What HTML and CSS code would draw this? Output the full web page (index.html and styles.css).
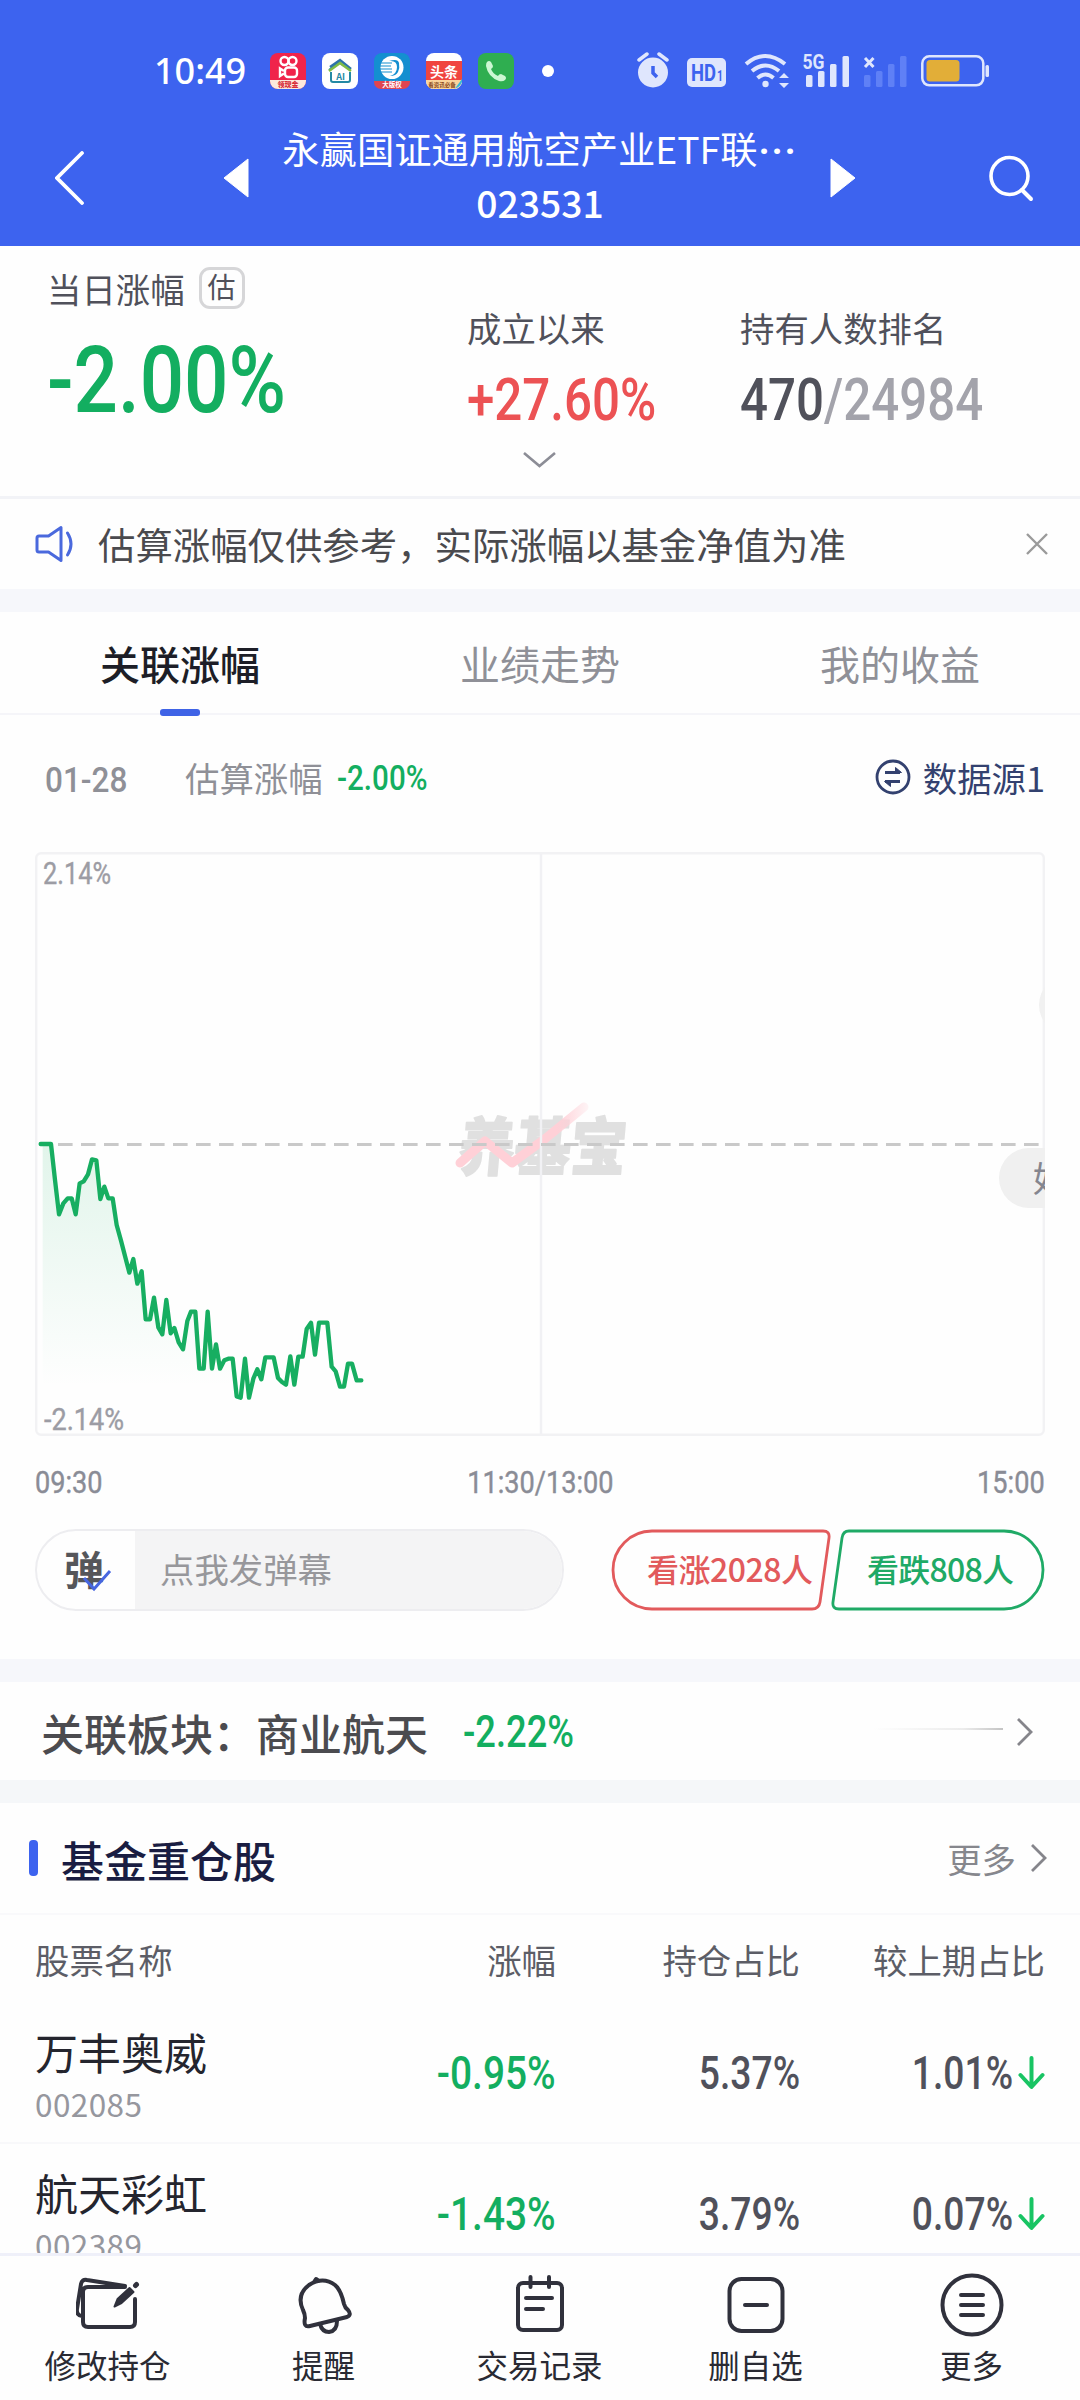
FILE: index.html
```html
<!DOCTYPE html>
<html lang="zh-CN">
<head>
<meta charset="utf-8">
<title>基金详情</title>
<link rel="stylesheet" href="styles.css">
</head>
<body>
<div class="page">
  <header class="top">
    <div class="status">
      <span class="clock">10:49</span>
      <div class="apps">
        <svg width="36" height="36" viewBox="0 0 36 36">
          <rect width="36" height="36" rx="8" fill="#f0244b"/>
          <path d="M0 27h36v1a8 8 0 0 1-8 8H8a8 8 0 0 1-8-8z" fill="#fde9dc"/>
          <g fill="none" stroke="#fff" stroke-width="2.4"><circle cx="14.500" cy="8" r="4"/><circle cx="22.500" cy="8" r="4"/><rect x="15" y="14.500" width="12" height="9.500" rx="3"/><path d="M14 18l-4-2.500v7.500l4-2.500"/></g>
          <text x="18" y="34.200" text-anchor="middle" font-size="7" font-weight="900" fill="#d8303c">领现金</text>
        </svg>
        <svg width="36" height="36" viewBox="0 0 36 36">
          <rect width="36" height="36" rx="8" fill="#fff"/>
          <path d="M7 17L17 9l5 4M9 19v8q0 2 2 2h15q2 0 2-2v-8" fill="none" stroke="#2489a4" stroke-width="2"/>
          <path d="M8 14l10-7 11 9" fill="none" stroke="#2d73a8" stroke-width="2.400"/>
          <path d="M7 18l11-8 11 8" fill="none" stroke="#7fbd45" stroke-width="2.600"/>
          <text x="18.500" y="26.500" text-anchor="middle" font-size="9" font-weight="700" fill="#2489a4">AI</text>
        </svg>
        <svg width="36" height="36" viewBox="0 0 36 36">
          <rect width="36" height="36" rx="8" fill="#148fd0"/>
          <circle cx="18" cy="14.500" r="11.500" fill="#fff"/>
          <path d="M15 8q8-1 8 6t-7 9q6 0 8-4t1-9-10-2z" fill="#148fd0"/>
          <path d="M7 10h11M6 13h11M6 16h12M7 19h11" stroke="#148fd0" stroke-width="1.200"/>
          <path d="M0 28h36v1a7 7 0 0 1-7 7H7a7 7 0 0 1-7-7z" fill="#e04550"/>
          <text x="18" y="34.400" text-anchor="middle" font-size="6.500" font-weight="700" fill="#fff">大版权</text>
        </svg>
        <svg width="36" height="36" viewBox="0 0 36 36">
          <rect width="36" height="36" rx="8" fill="#fff"/>
          <rect y="8" width="36" height="19" fill="#f0453f"/>
          <path d="M0 27h36v1a8 8 0 0 1-8 8H8a8 8 0 0 1-8-8z" fill="#fbd49b"/>
          <path d="M36 26v3q-2 5-7 6.500z" fill="#35b9d8"/>
          <text x="18" y="24" text-anchor="middle" font-size="14" font-weight="700" fill="#fff">头条</text>
          <text x="16" y="34" text-anchor="middle" font-size="5.500" font-weight="700" fill="#8a4a20">看资讯必备</text>
        </svg>
        <svg width="36" height="36" viewBox="0 0 36 36">
          <rect width="36" height="36" rx="8" fill="#2fae50"/>
          <path d="M9 9q2-2 4 0l2 4q0 2-2 3 2 5 7 7 1-2 3-2l4 2q2 2 0 4-2 2-6 1Q10 24 8 13q0-3 1-4z" fill="#cdf7d2"/>
        </svg>
      </div>
      <i class="dot"></i>
      <svg class="signals" width="270" height="40" viewBox="0 0 270 40">
        <g fill="#dfe6fd">
          <circle cx="16" cy="21.500" r="15"/>
          <path d="M2 9l8-6M22 3l8 6" stroke="#dfe6fd" stroke-width="3.500" stroke-linecap="round"/>
          <path d="M16 15v7l4 4" fill="none" stroke="#3d63ef" stroke-width="3.500"/>
          <rect x="50" y="7" width="39" height="29" rx="5"/>
        </g>
        <text x="54" y="29.500" font-family="Roboto" font-size="23" font-weight="700" fill="#3d63ef" textLength="25" lengthAdjust="spacingAndGlyphs">HD</text>
        <text x="80" y="29.500" font-family="Roboto" font-size="14" font-weight="700" fill="#3d63ef" textLength="6" lengthAdjust="spacingAndGlyphs">1</text>
        <g fill="none" stroke="#dfe6fd" stroke-width="4">
          <path d="M109 13q19-16 39 0M115 20q13.500-11 27 0M120.500 27q8-7 16 0"/>
        </g>
        <g fill="#dfe6fd">
          <circle cx="128.500" cy="33" r="3.200"/>
          <path d="M142 27l5-5 5 5zM142 32h10l-5 5z"/>
          <text x="165.500" y="18" font-family="Roboto" font-size="20" font-weight="700" textLength="22" lengthAdjust="spacingAndGlyphs">5G</text>
          <rect x="169" y="24" width="6.500" height="12" rx="1.500"/><rect x="181" y="20" width="6.500" height="16" rx="1.500"/><rect x="193" y="13" width="6.500" height="23" rx="1.500"/><rect x="205.500" y="5" width="6.500" height="31" rx="1.500"/>
        </g>
        <path d="M228 7l8.500 9M236.500 7l-8.500 9" stroke="#dfe6fd" stroke-width="3"/>
        <g fill="#5f80f6"><rect x="227" y="24" width="6.500" height="12" rx="1.500"/><rect x="239" y="20" width="6.500" height="16" rx="1.500"/><rect x="251" y="13" width="6.500" height="23" rx="1.500"/><rect x="263" y="5" width="6.500" height="31" rx="1.500"/></g>
      </svg>
      <svg class="battery" width="69" height="32" viewBox="0 0 69 32">
        <rect x="1.300" y="1.300" width="61" height="29" rx="7" fill="none" stroke="#dfe6fd" stroke-width="2.500"/>
        <rect x="5.500" y="5" width="33" height="21.500" rx="3.500" fill="#e2ae38"/>
        <rect x="64.500" y="10" width="3.500" height="12" rx="1.500" fill="#dfe6fd"/>
      </svg>
    </div>
    <div class="titlebar">
      <svg width="30" height="54" viewBox="0 0 30 54"><path d="M27 2L2 27l25 25" fill="none" stroke="#fff" stroke-width="3.800" stroke-linecap="round"/></svg>
      <svg class="prev" width="26" height="42" viewBox="0 0 26 42"><path d="M25 2v38L1 21z" fill="#fff" stroke="#fff" stroke-linejoin="round"/></svg>
      <div class="title"><span>永赢国证通用航空产业ETF联<span class="dots">···</span></span><b>023531</b></div>
      <svg class="next" width="26" height="42" viewBox="0 0 26 42"><path d="M1 2v38l24-19z" fill="#fff" stroke="#fff" stroke-linejoin="round"/></svg>
      <svg class="search" width="46" height="48" viewBox="0 0 46 48"><circle cx="20.500" cy="21" r="18.500" fill="none" stroke="#fff" stroke-width="3.600"/><path d="M33 35l9 9" stroke="#fff" stroke-width="4" stroke-linecap="round"/></svg>
    </div>
  </header>

  <main class="content">
    <section class="stats">
      <div class="today">
        <div class="label">当日涨幅<em>估</em></div>
        <div class="num big green">-2.00%</div>
      </div>
      <div class="stat since"><div class="label">成立以来</div><div class="num mid red">+27.60%</div></div>
      <div class="stat"><div class="label">持有人数排名</div><div class="num mid rank">470<span>/24984</span></div></div>
      <svg class="expand" width="35" height="18" viewBox="0 0 35 18"><path d="M2 2l15.500 13L33 2" fill="none" stroke="#8c8d96" stroke-width="2.600"/></svg>
    </section>

    <section class="notice">
      <svg width="40" height="38" viewBox="0 0 40 38" fill="none" stroke="#4a69dd" stroke-width="3" stroke-linejoin="round" stroke-linecap="round"><path d="M26 2.500v33L13.500 27H4q-2 0-2-2V13q0-2 2-2h9.500zM32.500 8q7 11 0 22"/></svg>
      <span>估算涨幅仅供参考，实际涨幅以基金净值为准</span>
      <svg width="24" height="24" viewBox="0 0 24 24"><path d="M2 2l20 20M22 2L2 22" stroke="#9a9a9a" stroke-width="2.400"/></svg>
    </section>

    <nav class="tabs"><a class="on">关联涨幅</a><a>业绩走势</a><a>我的收益</a></nav>

    <section class="trend">
      <div class="meta">
        <span class="num date">01-28</span><span class="est">估算涨幅</span><span class="num val green">-2.00%</span>
        <div class="source">
          <svg width="36" height="36" viewBox="0 0 36 36" fill="none" stroke="#33416f" stroke-width="2.800"><circle cx="18" cy="18" r="16"/><path d="M10 13.500h15M10 22.500h15" /><path d="M20.500 8.500l6 5h-6zM15.500 27.500l-6-5h6z" fill="#33416f" stroke-width="1"/></svg>
          <span>数据源1</span>
        </div>
      </div>
      <svg class="chart" width="1010" height="584" viewBox="0 0 1010 584">
        <defs>
          <linearGradient id="fade" x1="0" y1="0" x2="0" y2="1"><stop offset="0" stop-color="#0fae5c" stop-opacity=".12"/><stop offset="1" stop-color="#0fae5c" stop-opacity="0"/></linearGradient>
          <linearGradient id="streak" gradientUnits="userSpaceOnUse" x1="425" y1="0" x2="554" y2="0"><stop offset=".75" stop-color="#ffd0d7"/><stop offset="1" stop-color="#ffd0d7" stop-opacity=".2"/></linearGradient>
        </defs>
        <g transform="translate(422 318) skewX(-5) scale(1 1.120)" fill="#e0e0e0" stroke="#e0e0e0" stroke-width="1.500" stroke-linejoin="round">
          <text font-size="56" font-weight="900" textLength="168">养基宝</text>
        </g>
        <path d="M425 311l25-22 27 22 34-25 38-31" fill="none" stroke="url(#streak)" stroke-width="9" stroke-linecap="round" stroke-linejoin="round"/>
        <path d="M506 1v582" stroke="#f1f1f4" stroke-width="2.400"/>
        <rect x="1.200" y="1.200" width="1007.600" height="581.600" rx="5" fill="none" stroke="#f2f2f4" stroke-width="2.400"/>
        <path d="M23 292.500H1005" stroke="#c9c9c9" stroke-width="2.800" stroke-dasharray="14.600 8.400"/>
        <g transform="translate(-15 268) scale(.33333)">
          <path fill="url(#fade)" d="M68 72L93 72 105 180 117 283 130 250 143 235 155 235 167 283 179 190 191 184 204 163 216 118 229 121 241 237 253 200 265 235 278 235 290 315 303 362 328 458 340 417 352 491 365 454 377 598 402 533 415 622 439 540 452 640 489 688 513 575 526 575 538 746 551 746 563 575 576 746 600 746 638 716 650 800 68 800z"/>
          <polyline fill="none" stroke="#17ae61" stroke-width="13" stroke-linejoin="round" stroke-linecap="round" points="62,72 93,72 105,180 117,283 130,250 143,235 155,235 167,283 179,190 191,184 204,163 216,118 229,121 241,237 253,200 265,235 278,235 290,315 303,362 328,458 340,417 352,491 365,454 377,598 390,598 402,533 415,622 427,643 439,540 452,640 463,624 476,667 489,688 502,603 513,575 526,575 538,746 551,746 563,575 576,746 588,673 600,746 613,721 625,716 638,716 650,829 662,833 675,716 687,833 700,776 712,748 724,778 736,712 761,712 774,774 786,786 798,794 811,709 823,794 835,710 848,710 860,627 873,608 885,704 897,608 922,608 935,740 947,754 960,800 972,800 984,731 996,731 1010,781 1024,781"/>
        </g>
        <g font-family="Roboto" font-size="31" fill="#9c9ca4" stroke="#9c9ca4" stroke-width=".4">
          <text x="8" y="32" textLength="68" lengthAdjust="spacingAndGlyphs">2.14%</text>
          <text x="9" y="578" textLength="80" lengthAdjust="spacingAndGlyphs">-2.14%</text>
        </g>
        <rect x="1004" y="123" width="80" height="60" rx="30" fill="#f1f1f1"/>
        <rect x="964" y="296" width="120" height="60" rx="30" fill="#f0f0f0"/>
        <text x="998" y="340" font-size="35" fill="#85868f">好</text>
      </svg>
      <div class="axis"><span class="num">09:30</span><span class="num c">11:30/13:00</span><span class="num r">15:00</span></div>
      <div class="actions">
        <div class="danmaku">
          <div class="toggle">弹<svg width="32" height="24" viewBox="0 0 32 24"><path d="M3 10l10 11L29 3" fill="none" stroke="#4766e0" stroke-width="3"/></svg></div>
          <div class="field">点我发弹幕</div>
        </div>
        <div class="vote">
          <svg width="434" height="82" viewBox="0 0 434 82" fill="none" stroke-width="2.800">
            <path d="M41 2h171q7 0 6 7l-9 64q-1 7-8 7H41a39 39 0 0 1 0-78z" stroke="#e25a5c"/>
            <path d="M393 2H238q-6 0-7 7l-9 64q-1 7 6 7h165a39 39 0 0 0 0-78z" stroke="#1faa66"/>
            <g font-size="32" font-weight="500" stroke="none"><text x="36" y="53" fill="#e25a5c" textLength="166">看涨2028人</text><text x="256" y="53" fill="#1faa66" textLength="147">看跌808人</text></g>
          </svg>
        </div>
      </div>
    </section>

    <section class="sector">
      <span>关联板块：商业航天</span><span class="num green">-2.22%</span>
      <i class="ghost"></i>
      <svg width="18" height="30" viewBox="0 0 18 30"><path d="M2 2l13 13L2 28" fill="none" stroke="#85858b" stroke-width="2.800"/></svg>
    </section>

    <section class="holdings">
      <div class="head"><i></i><h2>基金重仓股</h2><span>更多</span><svg width="18" height="30" viewBox="0 0 18 30"><path d="M2 2l13 13L2 28" fill="none" stroke="#85858b" stroke-width="2.800"/></svg></div>
      <div class="grid cols"><span>股票名称</span><span>涨幅</span><span>持仓占比</span><span>较上期占比</span></div>
      <div class="grid row">
        <div class="name">万丰奥威<small>002085</small></div><span class="num green">-0.95%</span><span class="num">5.37%</span>
        <span class="chg"><span class="num">1.01%</span><svg width="27" height="34" viewBox="0 0 27 34"><path d="M13.500 2v28M2.500 19l11 12 11-12" fill="none" stroke="#18c463" stroke-width="4" stroke-linecap="round" stroke-linejoin="round"/></svg></span>
      </div>
      <div class="grid row">
        <div class="name">航天彩虹<small>002389</small></div><span class="num green">-1.43%</span><span class="num">3.79%</span>
        <span class="chg"><span class="num">0.07%</span><svg width="27" height="34" viewBox="0 0 27 34"><path d="M13.500 2v28M2.500 19l11 12 11-12" fill="none" stroke="#18c463" stroke-width="4" stroke-linecap="round" stroke-linejoin="round"/></svg></span>
      </div>
    </section>
  </main>

  <footer class="bar">
    <a><svg viewBox="0 0 64 64"><path d="M49 14H12q-5 0-5 5v30q0 5 5 5h42q5 0 5-5V26M49 13L11 7q-5-1-6 4L1 36q-1 6 5 7"/><path d="M38.500 33.500l3-7.500 12-11 4 4-12 11z" fill="#30313c" stroke-width="2"/><path d="M59.500 12.500l1-1" stroke-width="5"/></svg>修改持仓</a>
    <a><svg viewBox="0 0 64 64"><path d="M22 9l2-3 3 2M13 45Q13 41 11 37 4 22 17 12 31 3 43 12q6 5 9 19 1 4 4 6 4 5-1 7L18 53q-7 2-5-8z"/><path d="M28 51q2 8 9 8 8-1 8-11"/></svg>提醒</a>
    <a><svg viewBox="0 0 64 64"><rect x="10" y="10" width="44" height="47" rx="5"/><path d="M22.500 4v10M41 4v10M18 25h26M18 36h17"/></svg>交易记录</a>
    <a><svg viewBox="0 0 64 64"><rect x="5.500" y="6" width="53" height="52" rx="12"/><path d="M21 32h22"/></svg>删自选</a>
    <a><svg viewBox="0 0 64 64"><circle cx="32" cy="32" r="29.500"/><path d="M21 22h22M21 32h22M21 42h22"/></svg>更多</a>
  </footer>
</div>
</body>
</html>
```
FILE: styles.css
```css
* { box-sizing: border-box; }
body { margin: 0; background: #fefefe; font-family: "Noto Sans CJK SC", sans-serif; color: #50515b; }
svg { display: block; flex: none; }
svg text { font-family: "Noto Sans CJK SC", sans-serif; }
svg [font-family="Roboto"] text, svg text[font-family="Roboto"] { font-family: Roboto, sans-serif; }
.page { width: 1080px; height: 2400px; display: flex; flex-direction: column; overflow: hidden; }
.num { display: inline-block; font-family: Roboto, sans-serif; font-weight: 500; transform: scaleX(.86); transform-origin: left center; white-space: nowrap; line-height: 1; }
.green { color: #13ae60; }
.red { color: #ec5254; }

.top { height: 246px; background: #3d63ef; color: #fff; flex: none; }
.status { height: 110px; padding: 32px 0 0 154px; display: flex; align-items: center; }
.clock { width: 116px; font-size: 36px; font-weight: 500; font-family: "Noto Sans", sans-serif; line-height: 1; }
.apps { display: flex; gap: 16px; }
.dot { width: 12px; height: 12px; border-radius: 50%; background: #fff; margin: 0 83px 0 28px; }
.signals { margin-right: 14px; }
.titlebar { height: 136px; display: flex; padding-left: 55px; }
.titlebar > svg { margin-top: 41px; }
.titlebar .prev { margin: 47px 0 0 138px; }
.title { width: 582px; display: flex; flex-direction: column; align-items: center; font-size: 37.300px; line-height: 54px; padding-top: 11px; white-space: nowrap; }
.dots { font-family: Roboto, sans-serif; font-weight: 700; letter-spacing: 1.800px; padding-left: 1px; }
.title b { font-weight: 500; margin-top: -3px; }
.titlebar .next { margin: 47px 0 0 -1px; }
.titlebar .search { margin: 45px 0 0 133px; }

.content { flex: 1; min-height: 0; overflow: hidden; }
.label { font-size: 34.400px; line-height: 50px; white-space: nowrap; display: flex; align-items: center; }
.stats { height: 253px; border-bottom: 3px solid #f2f3f7; padding: 17px 0 0 47px; display: grid; grid-template-columns: 420px 273px 1fr; grid-template-rows: 184px auto; }
.label em { font-style: normal; font-size: 28px; width: 46px; height: 42px; line-height: 33px; text-align: center; border: 3px solid #d6d6d8; border-radius: 11px; margin-left: 14px; }
.big { font-size: 93px; margin-top: 21px; transform: scaleX(.84); }
.stat { padding-top: 39px; }
.mid { font-size: 59px; margin-top: 18px; transform: scaleX(.835); }
.rank span { color: #a3a3ab; }
.expand { grid-column: 1 / -1; margin: 4px 0 0 475px; }

.notice { border-bottom: 23px solid #f6f7fb; height: 113px; display: flex; align-items: center; padding: 0 31px 0 35px; font-size: 37.400px; color: #4a4a4e; }
.notice span { flex: 1; padding-left: 23px; white-space: nowrap; }

.tabs { height: 103px; border-bottom: 2px solid #f5f5f9; display: flex; font-size: 40px; color: #8f9097; }
.tabs a { flex: 1; display: flex; flex-direction: column; align-items: center; line-height: 102px; }
.tabs .on { color: #1d1e27; font-weight: 500; }
.tabs .on::after { content: ""; width: 40px; height: 7px; border-radius: 3px; background: #3f63e6; margin-top: -5px; z-index: 1; flex: none; }

.trend { height: 967px; padding: 0 35px; border-bottom: 23px solid #f6f7fb; }
.meta { height: 137px; padding: 0 0 13px 10px; display: flex; align-items: center; font-size: 34.400px; color: #8f9097; }
.date { width: 140px; font-size: 35px; transform: scaleX(.9); padding-top: 6px; }
.est { width: 152px; }
.val { font-size: 35px; padding-top: 3px; transform: scaleX(.845); }
.source { margin-left: auto; display: flex; gap: 12px; align-items: center; color: #33416f; }
.axis { display: grid; grid-template-columns: 1fr 1fr 1fr; font-size: 31px; color: #8a8c96; padding-top: 31px; height: 93px; }
.axis .num { font-weight: 400; -webkit-text-stroke: .4px #8a8c96; transform: scaleX(.875); }
.axis .c { text-align: center; transform-origin: center; }
.axis .r { text-align: right; transform-origin: right center; }
.actions { display: flex; justify-content: space-between; height: 82px; }
.danmaku { width: 529px; height: 82px; border: 2px solid #ededf0; border-radius: 41px; overflow: hidden; display: flex; }
.toggle { width: 98px; position: relative; font-size: 40px; font-weight: 700; line-height: 74px; padding-left: 27px; color: #55565a; }
.toggle svg { position: absolute; left: 44px; top: 37px; }
.field { flex: 1; background: #f4f4f5; padding-left: 25px; line-height: 75px; font-size: 34.400px; color: #97979b; }

.sector { height: 121px; border-bottom: 23px solid #f5f7f9; display: flex; align-items: center; padding: 1px 46px 0 41px; font-size: 43px; font-weight: 500; color: #4b4b4f; white-space: nowrap; }
.sector .num { font-size: 44px; margin-left: 35px; transform: scaleX(.825); }
.ghost { margin: 0 13px 6px auto; width: 200px; height: 2px; background: linear-gradient(90deg, #fefefe 35%, #ececec 80%, #c4c4c4); }

.head { height: 112px; border-bottom: 2px solid #f9f9fb; display: flex; align-items: center; padding: 0 32px 1px 29px; font-size: 34.400px; color: #86878d; }
.head i { width: 9px; height: 36px; border-radius: 4px; background: #3d63ef; }
.head h2 { font-size: 43px; font-weight: 500; color: #1a1d42; margin: 3px auto 0 23px; }
.head svg { margin-left: 14px; }
.grid { display: grid; grid-template-columns: 285px 236px 244px 245px; padding: 0 35px; align-items: center; }
.grid > * { text-align: right; }
.grid > :first-child { text-align: left; }
.cols { height: 88px; font-size: 34.400px; color: #5c5d66; white-space: nowrap; }
.row { height: 141px; border-bottom: 2px solid #f8f8fa; }
.row .num { font-size: 46px; transform: scaleX(.81); transform-origin: right center; justify-self: end; }
.row .num.green { transform: scaleX(.845); }
.name { font-size: 43px; line-height: 56px; color: #24252e; padding-top: 4px; }
.name small { display: block; font-size: 31.500px; line-height: 48px; letter-spacing: .4px; color: #96979e; font-weight: 400; }
.chg { display: flex; justify-content: flex-end; align-items: center; gap: 5px; }

.bar { height: 147px; flex: none; border-top: 3px solid #eff0f9; background: #fefefe; display: flex; }
.bar a { flex: 1; display: flex; flex-direction: column; align-items: center; padding: 17px 1px 0 0; font-size: 31.500px; line-height: 54px; color: #292a33; white-space: nowrap; }
.bar svg { width: 64px; height: 64px; fill: none; stroke: #30313c; stroke-width: 4; stroke-linecap: round; stroke-linejoin: round; }
```
